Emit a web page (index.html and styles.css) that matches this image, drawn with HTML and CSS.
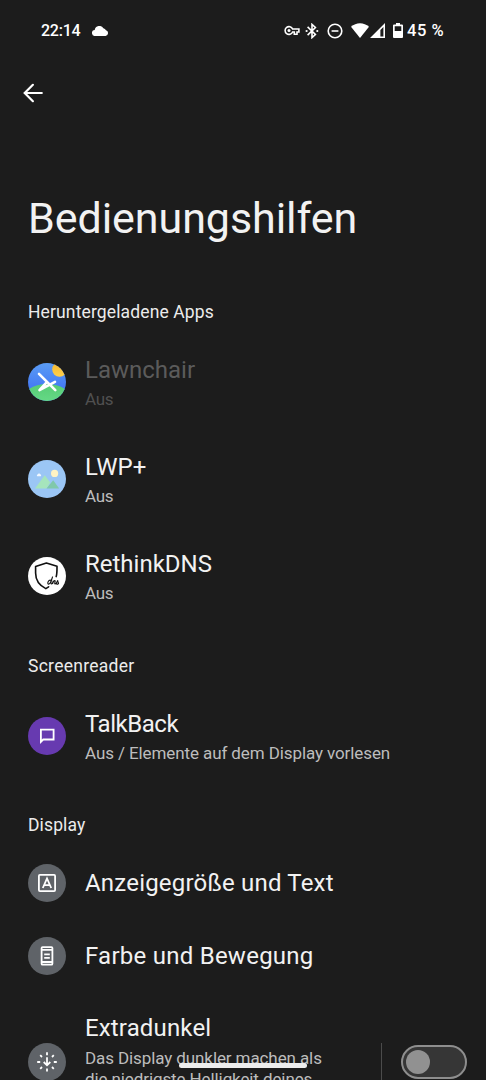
FILE: index.html
```html
<!DOCTYPE html>
<html lang="de">
<head>
<meta charset="utf-8">
<title>Bedienungshilfen</title>
<link rel="stylesheet" href="styles.css">
</head>
<body>
<div class="screen">
  <header class="status">
    <span class="clock">22:14</span>
    <svg class="cloud" width="17" height="10" viewBox="0 0 17 10"><path d="M3.3 10A3 3 0 0 1 2.7 3.9 4.7 4.7 0 0 1 11.4 2.3 3.6 3.6 0 0 1 14 4.2 3 3 0 0 1 13.6 10Z"/></svg>
    <svg class="key" width="16" height="11" viewBox="0 0 16 11"><path class="line" d="M8.6 4A3.9 3.9 0 1 0 8.6 7H10.3V9.3H13V7H14.9V4Z"/><circle cx="5" cy="5.5" r="1.5"/></svg>
    <svg class="bluetooth" width="14" height="16" viewBox="0 0 14 16"><path class="line" d="M2.6 3.9 10.4 11.5 7 14.6V1.4L10.4 4.5 2.6 12.1"/><circle cx="1.6" cy="8" r="1.1"/><circle cx="12.3" cy="8" r="1.1"/></svg>
    <svg class="dnd" width="16" height="16" viewBox="0 0 16 16"><circle class="line" cx="8" cy="8" r="6.8"/><path class="line" d="M4.6 8H11.4"/></svg>
    <svg class="wifi" width="18" height="15" viewBox="0 0 18 15"><path d="M0 3.8C5 -.9 13 -.9 18 3.8L9 15Z"/></svg>
    <svg class="signal" width="15" height="15" viewBox="0 0 15 15"><path fill-rule="evenodd" d="M0 15 15 0V15ZM10.4 13.4H13.4V4L10.4 7Z"/></svg>
    <svg class="battery" width="10" height="15" viewBox="0 0 10 15"><path fill-rule="evenodd" d="M3 0H7V1.6H9Q10 1.6 10 2.6V14Q10 15 9 15H1Q0 15 0 14V2.6Q0 1.6 1 1.6H3ZM1.7 3.2V8H8.3V3.2Z"/></svg>
    <span class="percent">45 %</span>
  </header>

  <nav class="toolbar">
    <svg width="20" height="20" viewBox="0 0 20 20"><path class="arrow" d="M18.8 10H2M9.9 1.8 1.7 10 9.9 18.2"/></svg>
  </nav>

  <h1 class="title">Bedienungshilfen</h1>

  <h2 class="category">Heruntergeladene Apps</h2>
  <div class="item disabled">
    <svg class="icon" viewBox="0 0 38 38">
      <defs>
        <clipPath id="disc"><circle cx="19" cy="19" r="19"/></clipPath>
        <linearGradient id="sky" x2="0" y2="1"><stop stop-color="#5a9cf5"/><stop offset=".7" stop-color="#4378f4"/></linearGradient>
        <linearGradient id="grass" x2="0" y2="1"><stop stop-color="#57cc75"/><stop offset="1" stop-color="#71e494"/></linearGradient>
        <linearGradient id="sun" x2="0" y2="1"><stop stop-color="#f2b530"/><stop offset="1" stop-color="#ffd04c"/></linearGradient>
      </defs>
      <g clip-path="url(#disc)">
        <rect width="38" height="38" fill="url(#sky)"/>
        <circle cx="31.5" cy="6.5" r="7.3" fill="url(#sun)"/>
        <ellipse cx="19" cy="37" rx="25" ry="16" fill="url(#grass)"/>
        <path class="chair" d="M11 10.8 27.3 27.2M27 18.8 11.5 27.2 18.8 19.2"/>
      </g>
    </svg>
    <div class="text"><div class="name">Lawnchair</div><div class="sub">Aus</div></div>
  </div>
  <div class="item">
    <svg class="icon" viewBox="0 0 38 38">
      <circle cx="19" cy="19" r="19" fill="#9bc6f5"/>
      <circle cx="26.6" cy="13.4" r="3.6" fill="#fff3c4"/>
      <path d="M18.4 28.6 25.2 20.3 31.2 28.6Z" fill="#80c8aa"/>
      <path d="M7 28.6 16.8 15.2 22.2 22.6 18.4 28.6Z" fill="#a6e5bc"/>
      <path d="M9.2 16.2A1.2 1.2 0 0 1 9.5 14.4 1.8 1.8 0 0 1 12.6 14.6 1 1 0 0 1 12.8 16.2Z" fill="#f1f8ff"/>
    </svg>
    <div class="text"><div class="name">LWP+</div><div class="sub">Aus</div></div>
  </div>
  <div class="item">
    <svg class="icon" viewBox="0 0 38 38">
      <circle cx="19" cy="19" r="19" fill="#fff"/>
      <path class="shield" d="M28.2 19.6C29.1 16.6 29 13.5 29 9.3L18.4 6 7.6 9.6V16C7.6 23.8 11.8 28.6 17.8 31.6L20.6 29.8"/>
      <path class="script" d="M22.6 23.2C20.5 22.7 18.8 26.7 20.5 27.1 22.5 27.3 23.6 22.5 24.6 19.6 23.4 23.4 22.2 27 23.5 27 24.3 27 25 24.9 25.4 23.7L24.5 27C25.3 24.6 26.3 23.2 27.1 23.7 27.7 24.2 26 26.9 27.1 27 28.5 26.9 29 24.5 29.8 23.4 29.3 25.3 31.7 26.5 29.8 27.1 28.8 27.3 28.4 26.8 28.6 26.5"/>
    </svg>
    <div class="text"><div class="name">RethinkDNS</div><div class="sub">Aus</div></div>
  </div>

  <h2 class="category reader">Screenreader</h2>
  <div class="item">
    <svg class="icon" viewBox="0 0 38 38">
      <circle cx="19" cy="19" r="19" fill="#673ab0"/>
      <path class="glyph" d="M12.9 24.8V12.7H25.6V22.5H15.2Z"/>
    </svg>
    <div class="text lowered"><div class="name talkback">TalkBack</div><div class="sub long">Aus / Elemente auf dem Display vorlesen</div></div>
  </div>

  <h2 class="category">Display</h2>
  <div class="item single">
    <svg class="icon" viewBox="0 0 38 38">
      <circle cx="19" cy="19" r="19" fill="#5f6368"/>
      <rect class="glyph" x="10.9" y="10.9" width="16.2" height="16.2" rx="1"/>
      <path class="glyph" d="M14.8 24 19 14.4 23.2 24M16.2 21.2H21.8"/>
    </svg>
    <div class="text"><div class="name size">Anzeigegröße und Text</div></div>
  </div>
  <div class="item single">
    <svg class="icon" viewBox="0 0 38 38">
      <circle cx="19" cy="19" r="19" fill="#5f6368"/>
      <rect class="glyph" x="13.6" y="10.1" width="10.8" height="17.6" rx="1"/>
      <path class="glyph" d="M13.6 12.9H24.4M13.6 25H24.4M16.2 17.4H21.8M16.2 20.8H21.8"/>
    </svg>
    <div class="text"><div class="name motion">Farbe und Bewegung</div></div>
  </div>
  <div class="item extra">
    <svg class="icon" viewBox="0 0 38 38">
      <circle cx="19" cy="19" r="19" fill="#5f6368"/>
      <path class="glyph" d="M19 9.2V12.2M19 25.5V28.5M9.2 19H12.2M25.8 19H28.8M12.2 12.2 14 14M24 14 25.8 12.2M12.2 25.8 14 24M24 24 25.8 25.8M19 14.3V22M15.7 19 19 22.3 22.3 19"/>
    </svg>
    <div class="text"><div class="name dim">Extradunkel</div><div class="sub long">Das Display dunkler machen als<br>die niedrigste Helligkeit deines</div></div>
    <div class="divider"></div>
    <div class="switch"><div class="knob"></div></div>
  </div>
  <div class="home"></div>
</div>
</body>
</html>
```

FILE: styles.css
```css
* { box-sizing: border-box; }
body {
  margin: 0;
  background: #1c1c1c;
  color: #f2f2f2;
  font-family: Roboto, "Liberation Sans", sans-serif;
}
.screen {
  position: relative;
  width: 486px;
  height: 1080px;
  overflow: hidden;
}

.status {
  display: flex;
  align-items: center;
  height: 61px;
  padding: 0 36px 0 41px;
  color: #fff;
  font-size: 16px;
  font-weight: 500;
  line-height: 21px;
  white-space: nowrap;
}
.status svg { flex: none; fill: #fff; }
.status .line { fill: none; stroke: #fff; stroke-width: 1.6; }
.clock { width: 51px; letter-spacing: -.25px; }
.key { margin-left: 175px; }
.bluetooth { margin-left: 5px; }
.dnd { margin-left: 8px; }
.wifi { margin-left: 8px; }
.signal { margin-left: 1px; }
.battery { margin-left: 8px; }
.percent { margin-left: 4px; font-size: 16.5px; letter-spacing: .55px; }

.toolbar {
  display: flex;
  align-items: center;
  height: 63px;
  padding-left: 23px;
}
.arrow { fill: none; stroke: #fff; stroke-width: 2.2; stroke-linecap: round; }

.title {
  margin: 0;
  padding: 69px 28px 28px;
  font-size: 43px;
  font-weight: 400;
  letter-spacing: -.06px;
  line-height: 50px;
}
.category {
  height: 62.5px;
  margin: 0;
  padding: 31px 28px 0;
  color: #ececec;
  font-size: 17.5px;
  font-weight: 400;
  letter-spacing: .13px;
  line-height: 20px;
}
.reader { letter-spacing: .27px; }

.item {
  display: flex;
  align-items: center;
  height: 97.1px;
  padding-left: 28px;
}
.single { height: 72.5px; }
.icon { flex: none; width: 38px; height: 38px; }
.text { margin-left: 19px; white-space: nowrap; }
.lowered { padding-top: 1.5px; }
.name { font-size: 24px; line-height: 30px; }
.sub {
  margin-top: 4px;
  color: #bdbdbd;
  font-size: 17px;
  letter-spacing: -.25px;
  line-height: 21px;
}
.sub.long { letter-spacing: -.1px; }
.disabled .name { color: #5b5b5b; }
.disabled .sub { color: #505050; }
.talkback { letter-spacing: -.45px; }
.size { letter-spacing: .2px; }
.motion { letter-spacing: .25px; }
.dim { letter-spacing: .15px; }

.chair { fill: none; stroke: #fff; stroke-width: 2.6; stroke-linecap: round; stroke-linejoin: round; }
.shield { fill: none; stroke: #111; stroke-width: 1.6; stroke-linecap: round; stroke-linejoin: round; }
.script { fill: none; stroke: #111; stroke-width: 1.1; stroke-linecap: round; }
.glyph { fill: none; stroke: #fff; stroke-width: 1.8; }

.extra { height: 140px; }
.extra .text { align-self: flex-start; width: 277px; padding-top: 21px; }
.extra .sub { margin-top: 5px; }
.divider { width: 1px; height: 38px; margin-left: 19px; background: #4b4b4b; }
.switch {
  display: flex;
  align-items: center;
  width: 66px;
  height: 34px;
  margin-left: 19px;
  padding-left: 3px;
  border: 2px solid #8e8e8e;
  border-radius: 17px;
  background: #363636;
}
.knob { width: 24px; height: 24px; border-radius: 50%; background: #919191; }
.home {
  position: absolute;
  left: 179px;
  top: 1063px;
  width: 128px;
  height: 5px;
  border-radius: 3px;
  background: #ededed;
}
```
